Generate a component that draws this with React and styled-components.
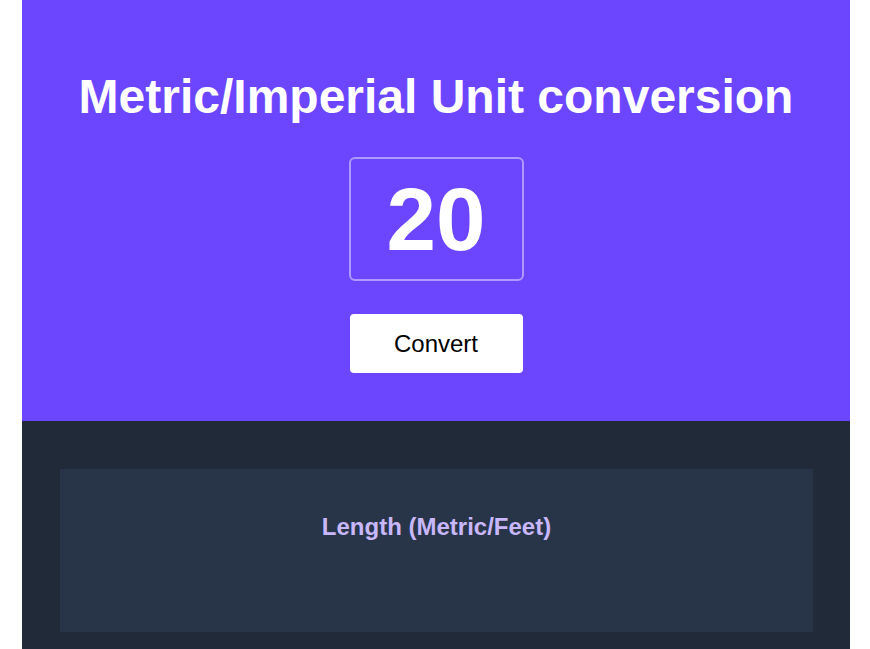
import React, { useState } from "react";
import styled, { createGlobalStyle } from "styled-components";

const GlobalStyle = createGlobalStyle`
  body {
    margin: 0;
    background: #ffffff;
    font-family: "Liberation Sans", Arial, Helvetica, sans-serif;
  }
`;

const Page = styled.div`
  width: 828px;
  margin: 0 20px 0 22px;
`;

const Hero = styled.header`
  background-color: #6c46ff;
  display: flex;
  flex-direction: column;
  align-items: center;
  padding: 69px 0 48px;
  h1 {
    margin: 0 0 33px;
    color: #ffffff;
    font-size: 48px;
    line-height: 55px;
    font-weight: 700;
    letter-spacing: 0;
  }
`;

const NumberInput = styled.input`
  box-sizing: border-box;
  width: 175px;
  height: 124px;
  background: transparent;
  border: 2px solid rgba(255, 255, 255, 0.45);
  border-radius: 6px;
  color: #ffffff;
  font-family: inherit;
  font-size: 89px;
  font-weight: 700;
  text-align: center;
  outline: none;
  padding: 0;
`;

const ConvertButton = styled.button`
  margin-top: 33px;
  width: 173px;
  height: 59px;
  border: none;
  border-radius: 4px;
  background: #ffffff;
  color: #000000;
  font-family: inherit;
  font-size: 24px;
  cursor: pointer;
`;

const Results = styled.section`
  background-color: #212a38;
  padding: 48px 37px 48px 38px;
`;

const Card = styled.div`
  background-color: #283548;
  min-height: 163px;
  padding: 44px 20px 0;
  box-sizing: border-box;
  h3 {
    margin: 0;
    text-align: center;
    color: #c8b8fb;
    font-size: 24px;
    line-height: 28px;
    font-weight: 700;
  }
`;

const App = () => {
  const [value, setValue] = useState("20");

  return (
    <Page>
      <GlobalStyle />
      <Hero>
        <h1>Metric/Imperial Unit conversion</h1>
        <NumberInput
          type="text"
          value={value}
          onChange={(e) => setValue(e.target.value)}
        />
        <ConvertButton>Convert</ConvertButton>
      </Hero>
      <Results>
        <Card>
          <h3>Length (Metric/Feet)</h3>
        </Card>
      </Results>
    </Page>
  );
};

export default App;
